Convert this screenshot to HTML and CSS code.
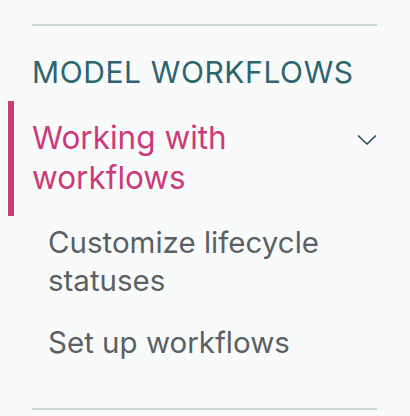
FILE: index.html
```html
<!DOCTYPE html>
<html>
<head>
<meta charset="utf-8">
<link rel="stylesheet" href="styles.css">
</head>
<body>
<nav class="nav">
  <div class="section">
    <h2 class="section-title">MODEL WORKFLOWS</h2>
    <div class="group">
      <div class="group-head">
        <span class="group-title">Working with workflows</span>
        <svg class="chevron" width="20" height="12" viewBox="0 0 20 12"><path d="M1 1.5 L10 10 L19 1.5" fill="none" stroke="#24464f" stroke-width="1.6"/></svg>
      </div>
      <ul class="items">
        <li class="item">Customize lifecycle statuses</li>
        <li class="item">Set up workflows</li>
      </ul>
    </div>
  </div>
</nav>
</body>
</html>
```
FILE: styles.css
```css
html, body {
  margin: 0;
  padding: 0;
  background: #f9fbfb;
}
body {
  font-family: Inter, "Noto Sans", sans-serif;
  width: 410px;
  height: 416px;
  overflow: hidden;
}
.nav {
  padding: 24px 33px 0 32px;
}
.section {
  border-top: 2px solid #c9d8da;
  border-bottom: 2px solid #c9d8da;
  padding-bottom: 47px;
}
.section-title {
  margin: 26px 0 0;
  font-weight: 400;
  font-size: 30px;
  letter-spacing: 0.6px;
  line-height: 40px;
  color: #2c6470;
}
.group {
  margin-top: 26px;
}
.group-head {
  position: relative;
  display: flex;
  justify-content: space-between;
  align-items: flex-start;
}
.group-head::before {
  content: "";
  position: absolute;
  left: -24px;
  top: -17px;
  bottom: -18px;
  width: 6px;
  background: #cc3a7a;
}
.group-title {
  font-size: 31.5px;
  line-height: 40px;
  color: #cc3a7a;
  max-width: 270px;
}
.chevron {
  margin-top: 16px;
  margin-right: 0;
}
.items {
  list-style: none;
  margin: 25px 0 0;
  padding: 0 0 0 16px;
}
.item {
  font-size: 29.5px;
  line-height: 38px;
  color: #5b6063;
  margin-bottom: 24px;
}
.item:last-child {
  margin-bottom: 0;
}
```
